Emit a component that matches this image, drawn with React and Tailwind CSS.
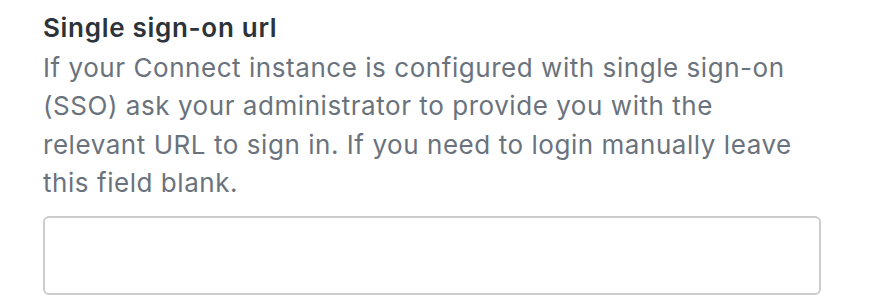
export default function App() {
  return (
    <div className="w-[896px] h-[308px] bg-white pl-[43px] pt-[9px] font-['Inter',sans-serif]">
      <label className="block text-[26px] leading-[38px] tracking-[0.7px] font-semibold text-[#2c333a] mb-[2px]">
        Single sign-on url
      </label>
      <p className="w-[780px] text-[26px] leading-[38.3px] tracking-[0.55px] text-[#6a737d]">
        If your Connect instance is configured with single sign-on (SSO) ask your administrator to provide you with the
        relevant URL to sign in. If you need to login manually leave this field blank.
      </p>
      <input
        type="text"
        className="block mt-[14px] w-[778px] h-[79px] border-2 border-[#cccccc] rounded-[6px] bg-white"
      />
    </div>
  );
}
